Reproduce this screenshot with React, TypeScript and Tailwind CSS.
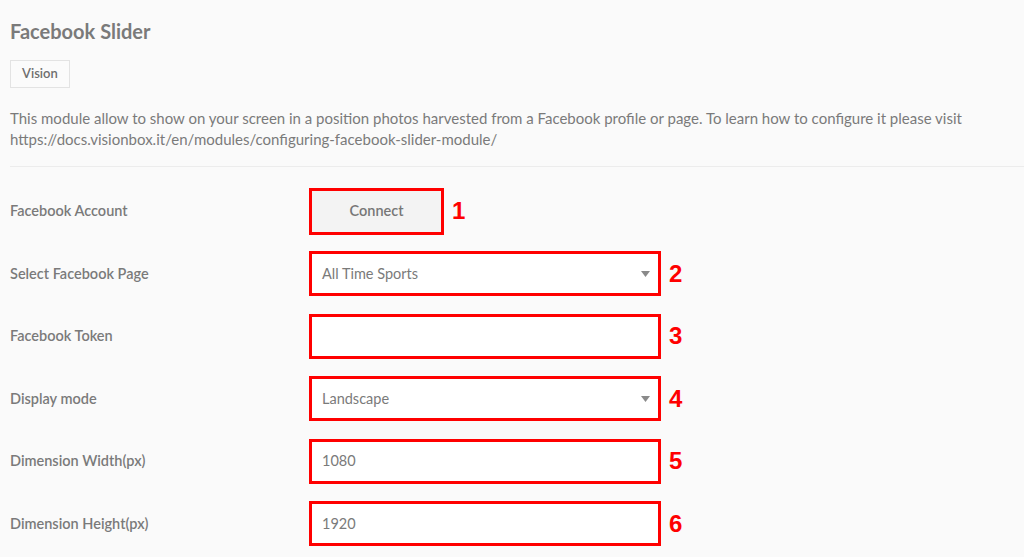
import React from "react";

function Num({ n }: { n: string }) {
  return (
    <span
      className="ml-[8px] text-[24px] font-bold leading-none text-[#ff0000]"
      style={{ fontFamily: '"Liberation Sans", Arial, sans-serif' }}
    >
      {n}
    </span>
  );
}

function Arrow() {
  return (
    <svg width="9" height="6" viewBox="0 0 9 6" className="ml-auto mr-[8px]">
      <path d="M0 0 H9 L4.5 6 Z" fill="#8a8a8a" />
    </svg>
  );
}

function Row({ label, children }: { label: string; children: React.ReactNode }) {
  return (
    <div className="flex h-[62.5px] items-center">
      <div className="w-[299px] text-[14.5px] font-semibold text-[#7a7a7a]">{label}</div>
      {children}
    </div>
  );
}

function Field({ value, select }: { value?: string; select?: boolean }) {
  return (
    <div className="flex items-center">
      <div className="flex h-[45px] w-[352px] items-center border-[3px] border-[#ff0000] bg-white pl-[10px] text-[14.5px] text-[#7a7a7a]">
        <span>{value}</span>
        {select && <Arrow />}
      </div>
    </div>
  );
}

export default function App() {
  return (
    <div
      className="h-[557px] w-[1024px] overflow-hidden bg-[#fafafa] pl-[10px]"
      style={{ fontFamily: 'Lato, "Open Sans", sans-serif' }}
    >
      <h1 className="pt-[19px] text-[20px] font-bold leading-[24px] text-[#7a7a7a]">Facebook Slider</h1>
      <div className="mt-[17px] inline-flex h-[28px] items-center border border-[#e3e3e3] bg-[#fbfbfb] px-[11px] text-[13px] font-semibold text-[#6e6e6e]">
        Vision
      </div>
      <p className="mt-[20px] pr-[40px] text-[15px] leading-[21px] text-[#7a7a7a]">
        This module allow to show on your screen in a position photos harvested from a Facebook profile or page. To learn how to configure it please visit https://docs.visionbox.it/en/modules/configuring-facebook-slider-module/
      </p>
      <div className="mt-[16px] h-[1px] bg-[#ececec]" />
      <div className="mt-[13px] flex flex-col">
        <Row label="Facebook Account">
          <div className="flex items-center">
            <div className="flex h-[47px] w-[135px] items-center justify-center border-[3px] border-[#ff0000] bg-[#f3f3f3] text-[14.5px] font-semibold text-[#777777]">
              Connect
            </div>
            <Num n="1" />
          </div>
        </Row>
        <Row label="Select Facebook Page">
          <Field value="All Time Sports" select />
          <Num n="2" />
        </Row>
        <Row label="Facebook Token">
          <Field />
          <Num n="3" />
        </Row>
        <Row label="Display mode">
          <Field value="Landscape" select />
          <Num n="4" />
        </Row>
        <Row label="Dimension Width(px)">
          <Field value="1080" />
          <Num n="5" />
        </Row>
        <Row label="Dimension Height(px)">
          <Field value="1920" />
          <Num n="6" />
        </Row>
      </div>
    </div>
  );
}
